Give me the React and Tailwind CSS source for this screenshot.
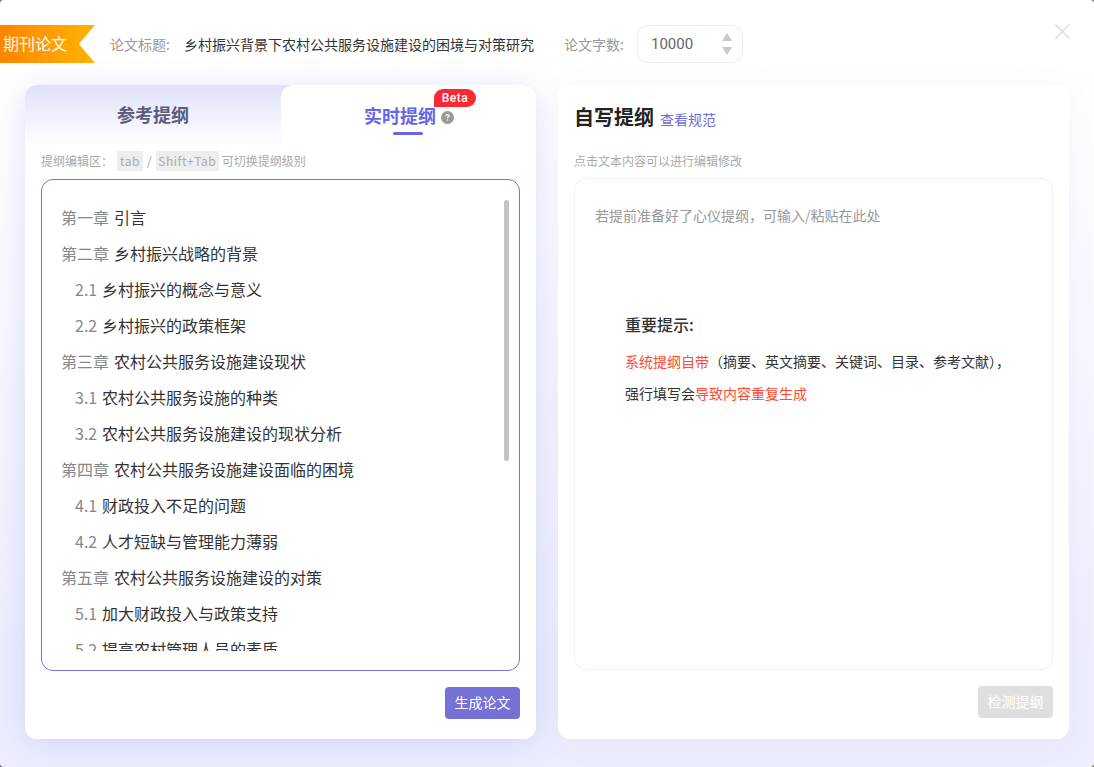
import React from "react";
import { FaCircleQuestion } from "react-icons/fa6";

const outline = [
  ["第一章", "引言", 0],
  ["第二章", "乡村振兴战略的背景", 0],
  ["2.1", "乡村振兴的概念与意义", 1],
  ["2.2", "乡村振兴的政策框架", 1],
  ["第三章", "农村公共服务设施建设现状", 0],
  ["3.1", "农村公共服务设施的种类", 1],
  ["3.2", "农村公共服务设施建设的现状分析", 1],
  ["第四章", "农村公共服务设施建设面临的困境", 0],
  ["4.1", "财政投入不足的问题", 1],
  ["4.2", "人才短缺与管理能力薄弱", 1],
  ["第五章", "农村公共服务设施建设的对策", 0],
  ["5.1", "加大财政投入与政策支持", 1],
  ["5.2", "提高农村管理人员的素质", 1],
];

export default function App() {
  return (
    <div className="bg-[#777] h-[767px] w-[1094px] overflow-hidden font-['Noto_Sans_CJK_SC','Microsoft_YaHei',sans-serif]">
      <div className="h-full rounded-[4px] bg-gradient-to-b from-white from-[8%] to-[#eceefd] to-[85%] flex flex-col relative">
        {/* header */}
        <div className="h-[85px] pt-[25px] flex items-start shrink-0">
          <div className="w-[95px] h-[38px] bg-gradient-to-r from-[#ff8400] to-[#ffb300] text-white text-[16px] leading-[37px] pl-[3px] [clip-path:polygon(0_0,100%_0,83%_50%,100%_100%,0_100%)]">
            期刊论文
          </div>
          <div className="ml-[15px] h-[38px] flex items-center text-[14px]">
            <span className="text-[#999] w-[74px]">论文标题:</span>
            <span className="text-[#333] w-[350px]">乡村振兴背景下农村公共服务设施建设的困境与对策研究</span>
            <span className="text-[#999] ml-[30px] w-[73px]">论文字数:</span>
            <div className="w-[106px] h-[38px] rounded-[10px] border border-[#eeeeee] bg-white flex items-center justify-between pl-[13px] pr-[10px]">
              <span className="text-[#666] text-[15px] font-['Roboto',sans-serif]">10000</span>
              <svg width="10" height="22" viewBox="0 0 10 22" fill="#c8c8c8">
                <path d="M5 0 L10 8 L0 8 Z" />
                <path d="M0 14 L10 14 L5 22 Z" />
              </svg>
            </div>
          </div>
          <svg className="absolute left-[1055px] top-[24px]" width="15" height="15" viewBox="0 0 15 15" stroke="#d8d8d8" strokeWidth="1.4" fill="none">
            <path d="M0.5 0.5 L14.5 14.5 M14.5 0.5 L0.5 14.5" />
          </svg>
        </div>

        <div className="flex gap-[22px] px-[25px]">
          {/* left panel */}
          <div className="w-[511px] h-[654px] bg-white rounded-[12px] shadow-[0_4px_30px_rgba(98,98,230,0.18)] flex flex-col overflow-hidden">
            <div className="flex h-[60px] shrink-0 bg-gradient-to-b from-[#dfe1f8] to-white">
              <div className="w-[256px] flex items-center justify-center text-[18px] font-bold text-[#5c5c7c] pb-[1px]">参考提纲</div>
              <div className="w-[255px] bg-white rounded-t-[12px] relative">
                <div className="absolute left-[83px] top-[20px] flex items-center">
                  <span className="text-[18px] leading-[20px] font-bold text-[#6565e6]">实时提纲</span>
                  <FaCircleQuestion className="ml-[5px] mt-[4px] text-[#999] w-[13px] h-[13px]" />
                </div>
                <div className="absolute left-[112px] top-[47px] w-[30px] h-[3px] rounded-full bg-[#6666ea]" />
                <div className="absolute left-[153px] top-[4px] w-[42px] h-[18px] bg-[#fa2a35] text-white text-[12px] leading-[18px] tracking-[0.5px] text-center rounded-[9px] rounded-bl-none font-medium font-['Roboto',sans-serif]">
                  Beta
                </div>
              </div>
            </div>
            <div className="px-[16px] flex items-center h-[32px] mb-[2px] text-[12px] text-[#aaa]">
              <span className="w-[76px]">提纲编辑区：</span>
              <span className="bg-[#eeeeee] h-[20px] w-[26px] leading-[20px] text-center tracking-[0.5px]">tab</span>
              <span className="mx-[4px]">/</span>
              <span className="bg-[#eeeeee] h-[20px] w-[63px] leading-[20px] text-center tracking-[0.5px]">Shift+Tab</span>
              <span className="ml-[3px]">可切换提纲级别</span>
            </div>
            <div className="mx-[16px] h-[492px] border border-[#7571d6] rounded-[12px] pt-[19px] pb-[19px] pl-[20px] pr-[10px] flex">
              <div className="flex-1 overflow-hidden">
                {outline.map(([num, text, sub]) => (
                  <div key={num} className={`h-[36px] leading-[36px] text-[16px] whitespace-nowrap ${sub ? "pl-[13px]" : "-ml-[1px]"}`}>
                    <span className={`inline-block text-[#888] ${sub ? "w-[27px]" : "w-[53px]"}`}>{num}</span>
                    <span className="text-[#333]">{text}</span>
                  </div>
                ))}
              </div>
              <div className="w-[5px] h-[261px] mt-[1px] bg-[#c4c4c4] rounded-full" />
            </div>
            <div className="flex justify-end px-[16px] pt-[16px]">
              <button className="w-[75px] h-[32px] pb-[2px] bg-[#7571d6] text-white text-[14px] rounded-[4px]">生成论文</button>
            </div>
          </div>

          {/* right panel */}
          <div className="w-[511px] h-[654px] bg-white rounded-[12px] shadow-[0_4px_30px_rgba(98,98,230,0.06)] flex flex-col px-[16px]">
            <div className="h-[60px] pt-[18px] flex items-start shrink-0">
              <span className="text-[20px] leading-[28px] font-bold text-[#222]">自写提纲</span>
              <span className="ml-[6px] mt-[6px] text-[14px] leading-[20px] text-[#6b6bd6]">查看规范</span>
            </div>
            <div className="h-[31px] mb-[2px] flex items-center text-[12px] text-[#aaa]">点击文本内容可以进行编辑修改</div>
            <div className="h-[492px] border border-[#f3f3f6] rounded-[12px] px-[20px] pt-[26px]">
              <p className="text-[14px] leading-[20px] text-[#999]">若提前准备好了心仪提纲，可输入/粘贴在此处</p>
              <div className="pl-[30px] mt-[87px]">
                <p className="text-[16px] leading-[24px] font-medium text-[#333]">重要提示:</p>
                <p className="text-[14px] leading-[32px] mt-[9px] text-[#333]">
                  <span className="text-[#ff4a2e]">系统提纲自带</span>（摘要、英文摘要、关键词、目录、参考文献），
                </p>
                <p className="text-[14px] leading-[32px] text-[#333]">
                  强行填写会<span className="text-[#ff4a2e]">导致内容重复生成</span>
                </p>
              </div>
            </div>
            <div className="flex justify-end pt-[16px]">
              <button className="w-[75px] h-[32px] pb-[2px] bg-[#dfdfdf] text-white text-[14px] rounded-[4px]">检测提纲</button>
            </div>
          </div>
        </div>
      </div>
    </div>
  );
}
